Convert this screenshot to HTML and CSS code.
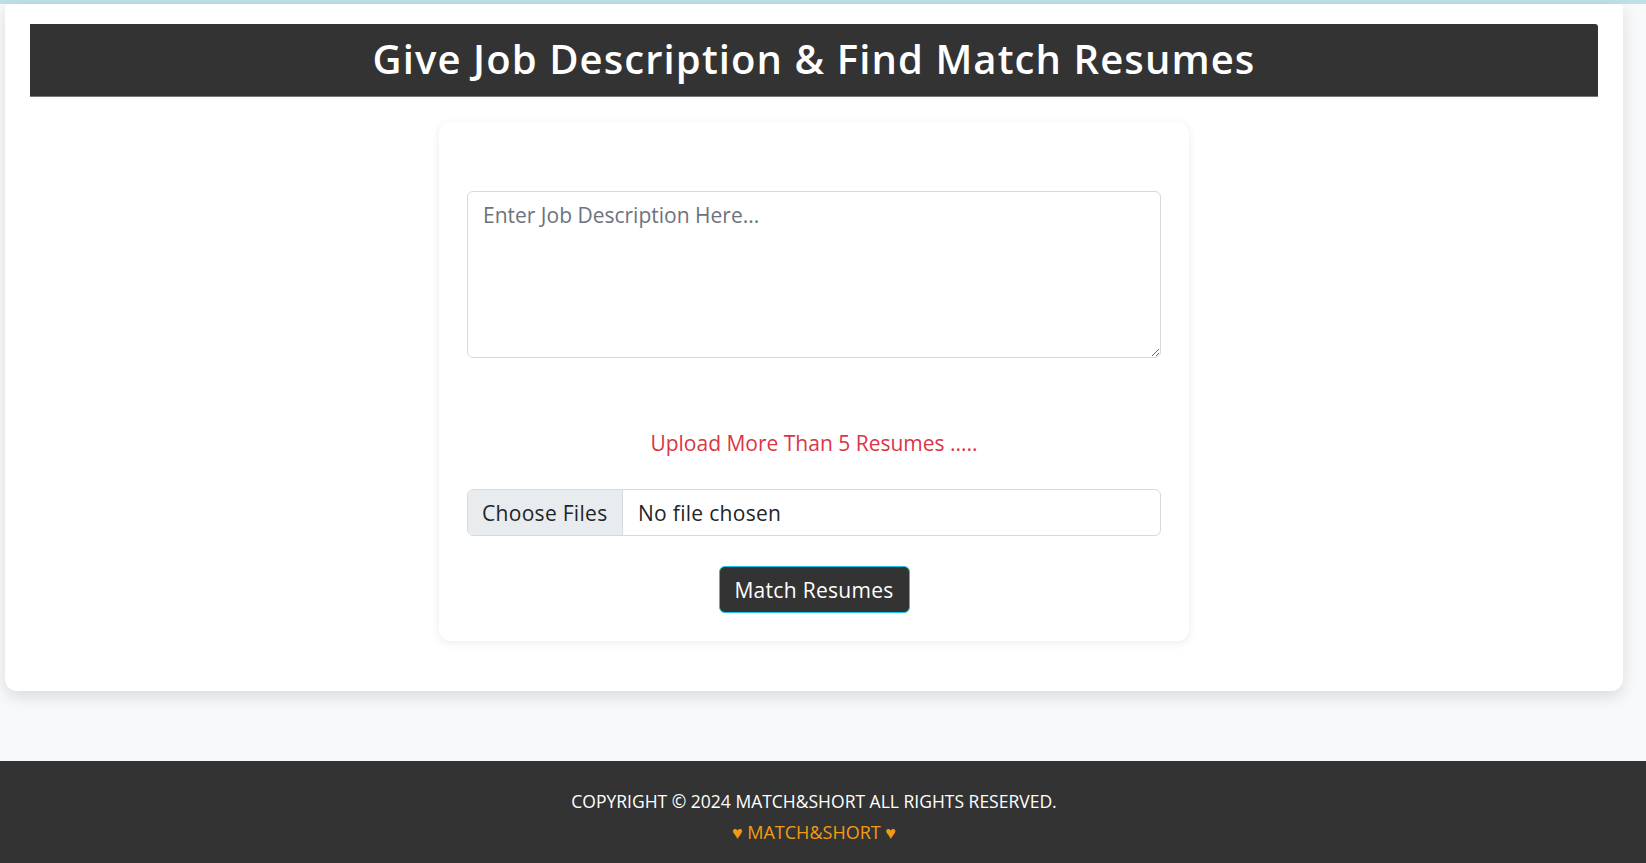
FILE: index.html
```html
<!DOCTYPE html>
<html lang="en">
<head>
<meta charset="utf-8">
<title>Match &amp; Short</title>
<link rel="stylesheet" href="styles.css">
</head>
<body>
<div class="topline"></div>
<main class="container">
  <header class="title-bar">
    <h1>Give Job Description &amp; Find Match Resumes</h1>
  </header>
  <section class="card">
    <form class="match-form">
      <textarea class="jd" rows="5" placeholder="Enter Job Description Here..."></textarea>
      <p class="notice">Upload More Than 5 Resumes .....</p>
      <label class="file-input">
        <span class="file-btn">Choose Files</span>
        <span class="file-name">No file chosen</span>
      </label>
      <div class="actions">
        <button type="button" class="match-btn">Match Resumes</button>
      </div>
    </form>
  </section>
</main>
<footer class="footer">
  <p class="copy">COPYRIGHT © 2024 MATCH&amp;SHORT ALL RIGHTS RESERVED.</p>
  <p class="brand">♥ MATCH&amp;SHORT ♥</p>
</footer>
</body>
</html>
```

FILE: styles.css
```css
* { box-sizing: border-box; }

html, body {
  margin: 0;
  padding: 0;
}

body {
  background: #f8f9fa;
  font-family: "Open Sans", "Liberation Sans", sans-serif;
  color: #212529;
  min-height: 863px;
  display: flex;
  flex-direction: column;
}

.topline {
  height: 4px;
  background: #bde1e6;
}

.container {
  width: 1618px;
  margin-left: 5px;
  background: #fff;
  border-radius: 4px 4px 12px 12px;
  box-shadow: 0 6px 16px rgba(0, 0, 0, 0.12);
  padding: 20px 25px 50px;
  display: flex;
  flex-direction: column;
  align-items: center;
}

.title-bar {
  width: 100%;
  height: 73px;
  background: #333;
  border-radius: 0 3px 0 0;
  border-bottom: 1px solid #777;
  display: flex;
  align-items: center;
  justify-content: center;
  padding-bottom: 2px;
}

.title-bar h1 {
  margin: 0;
  color: #fff;
  font-size: 40px;
  font-weight: 600;
  letter-spacing: 1.1px;
  line-height: 1.2;
}

.card {
  width: 750px;
  margin-top: 25px;
  background: #fff;
  border-radius: 12px;
  box-shadow: 0 2px 10px rgba(0, 0, 0, 0.08);
  padding: 69px 28px 28px;
}

.match-form {
  display: flex;
  flex-direction: column;
}

.jd {
  width: 100%;
  height: 167px;
  border: 1px solid #d5dae0;
  border-radius: 6px;
  padding: 8px 15px;
  font-family: inherit;
  font-size: 21px;
  line-height: 1.45;
  color: #212529;
  resize: vertical;
  display: block;
}

.jd::placeholder {
  color: #6c737d;
}

.notice {
  margin: 70px 0 0;
  text-align: center;
  color: #dc3545;
  font-size: 21px;
  line-height: 30px;
}

.file-input {
  margin-top: 31px;
  height: 47px;
  display: flex;
  align-items: stretch;
  border: 1px solid #d5dae0;
  border-radius: 6px;
  overflow: hidden;
  font-size: 21px;
  letter-spacing: 0.3px;
  line-height: 30px;
  cursor: pointer;
}

.file-btn {
  width: 155px;
  background: #e9ecef;
  border-right: 1px solid #d5dae0;
  display: flex;
  align-items: center;
  padding: 0 14px;
  color: #212529;
}

.file-name {
  display: flex;
  align-items: center;
  padding: 0 15px;
  color: #212529;
}

.actions {
  margin-top: 30px;
  display: flex;
  justify-content: center;
}

.match-btn {
  height: 47px;
  width: 191px;
  background: #333;
  color: #fff;
  border: 1px solid #1bc6e6;
  border-radius: 6px;
  font-family: inherit;
  font-size: 21px;
  letter-spacing: 0.3px;
  line-height: 30px;
  padding: 0 10px;
  cursor: pointer;
}

.footer {
  margin-top: 70px;
  flex: 1;
  background: #333;
  text-align: center;
  padding: 27px 18px 0 0;
}

.footer p {
  margin: 0;
  font-size: 17.5px;
  line-height: 27px;
}

.copy {
  color: #fff;
}

.brand {
  margin-top: 4px !important;
  color: #f39c12;
  font-size: 18px !important;
}
```
